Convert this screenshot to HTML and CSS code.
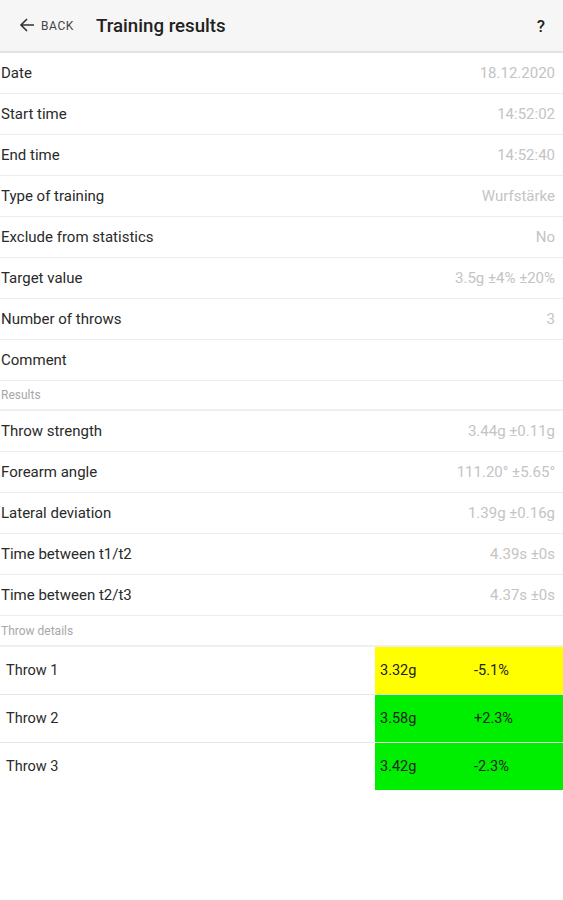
FILE: index.html
```html
<!DOCTYPE html>
<html>
<head>
<meta charset="utf-8">
<link rel="stylesheet" href="styles.css">
</head>
<body>
<header class="bar">
  <div class="back">
    <svg class="arrow" width="16" height="16" viewBox="0 0 16 16"><path d="M15 8H2M8 2L2 8l6 6" fill="none" stroke="#333" stroke-width="1.6"/></svg>
    <span>BACK</span>
  </div>
  <div class="title">Training results</div>
  <div class="help">?</div>
</header>
<main>
  <div class="row"><span class="label">Date</span><span class="value">18.12.2020</span></div>
  <div class="row"><span class="label">Start time</span><span class="value">14:52:02</span></div>
  <div class="row"><span class="label">End time</span><span class="value">14:52:40</span></div>
  <div class="row"><span class="label">Type of training</span><span class="value">Wurfstärke</span></div>
  <div class="row"><span class="label">Exclude from statistics</span><span class="value">No</span></div>
  <div class="row"><span class="label">Target value</span><span class="value">3.5g ±4% ±20%</span></div>
  <div class="row"><span class="label">Number of throws</span><span class="value">3</span></div>
  <div class="row"><span class="label">Comment</span><span class="value"></span></div>
  <div class="section">Results</div>
  <div class="row"><span class="label">Throw strength</span><span class="value">3.44g ±0.11g</span></div>
  <div class="row"><span class="label">Forearm angle</span><span class="value">111.20° ±5.65°</span></div>
  <div class="row"><span class="label">Lateral deviation</span><span class="value">1.39g ±0.16g</span></div>
  <div class="row"><span class="label">Time between t1/t2</span><span class="value">4.39s ±0s</span></div>
  <div class="row"><span class="label">Time between t2/t3</span><span class="value">4.37s ±0s</span></div>
  <div class="section tall">Throw details</div>
  <div class="throw"><span class="tname">Throw 1</span><div class="tcell yellow"><span class="tval">3.32g</span><span class="tpct">-5.1%</span></div></div>
  <div class="throw"><span class="tname">Throw 2</span><div class="tcell green"><span class="tval">3.58g</span><span class="tpct">+2.3%</span></div></div>
  <div class="throw last"><span class="tname">Throw 3</span><div class="tcell green"><span class="tval">3.42g</span><span class="tpct">-2.3%</span></div></div>
</main>
</body>
</html>
```
FILE: styles.css
```css
* { box-sizing: border-box; }
html, body { margin: 0; padding: 0; background: #fff; }
body { font-family: Roboto, "Liberation Sans", sans-serif; color: #222; width: 563px; }

.bar {
  height: 53px;
  background: #f6f6f6;
  border-bottom: 2px solid #e2e2e2;
  display: flex;
  align-items: center;
  padding: 0 18px 0 19px;
}
.back { display: flex; align-items: center; gap: 6px; color: #444; font-size: 12px; letter-spacing: 0.6px; }
.arrow { margin-top: -1px; }
.title { margin-left: 22px; font-size: 18.7px; color: #222; font-weight: 500; flex: 1; }
.help { font-size: 17px; font-weight: 500; color: #222; }

.row {
  height: 41px;
  display: flex;
  align-items: center;
  justify-content: space-between;
  border-bottom: 1px solid #ececec;
  padding: 0 8px 0 1px;
  font-size: 15px;
}
.label { color: #2a2a2a; }
.value { color: #c4c4c4; }

.section {
  height: 30px;
  display: flex;
  align-items: center;
  padding-left: 1px;
  font-size: 12px;
  color: #a8a8a8;
  border-bottom: 2px solid #efefef;
}
.section.tall { height: 31px; }

.throw {
  height: 48px;
  display: flex;
  align-items: stretch;
  border-bottom: 1px solid #e8e8e8;
  font-size: 14.5px;
}
.throw.last { border-bottom: none; height: 47px; }
.tname { flex: 1; display: flex; align-items: center; padding-left: 6px; color: #2a2a2a; }
.tcell { width: 188px; display: flex; align-items: center; padding-left: 5px; color: #222; }
.yellow { background: #ffff00; }
.green { background: #00ee00; }
.tval { width: 94px; }
```
